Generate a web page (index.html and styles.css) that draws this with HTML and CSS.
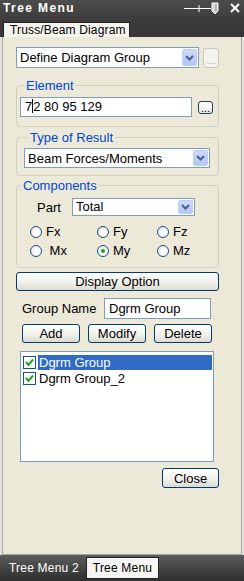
FILE: index.html
```html
<!DOCTYPE html>
<html lang="en">
<head>
    <meta charset="UTF-8">
    <title>Tree Menu</title>
    <link rel="stylesheet" href="styles.css">
</head>
<body>
<div class="window">
    <div class="titlebar">
        <span class="title">Tree Menu</span>
        <svg class="pin" width="36" height="14" viewBox="0 0 36 14">
            <path d="M0 7.5H27M15 4V11" stroke="#fff" stroke-width="1"/>
            <path d="M28 2H34V10L31 13L28 10Z" fill="#d8d8d8" stroke="#fff" stroke-width="1"/>
            <path d="M32 3V10" stroke="#888" stroke-width="1"/>
        </svg>
        <svg class="close" width="10" height="10" viewBox="0 0 10 10">
            <path d="M1 1L9 9M9 1L1 9" stroke="#fff" stroke-width="2"/>
        </svg>
    </div>
    <div class="tabstrip">
        <div class="tab">Truss/Beam Diagram</div>
    </div>

    <div class="panel">
        <div class="row">
            <div class="combo main">
                <span class="val">Define Diagram Group</span>
                <span class="arrow"><svg width="9" height="6" viewBox="0 0 9 6"><path d="M1 1L4.5 4.5L8 1" stroke="#4d6185" stroke-width="2" fill="none"/></svg></span>
            </div>
            <button class="dots off">...</button>
        </div>

        <fieldset class="group element">
            <legend>Element</legend>
            <div class="row">
                <div class="textbox elem">7<span class="caret"></span>2 80 95 129</div>
                <button class="dots small">...</button>
            </div>
        </fieldset>

        <fieldset class="group result">
            <legend>Type of Result</legend>
            <div class="combo">
                <span class="val">Beam Forces/Moments</span>
                <span class="arrow"><svg width="9" height="6" viewBox="0 0 9 6"><path d="M1 1L4.5 4.5L8 1" stroke="#4d6185" stroke-width="2" fill="none"/></svg></span>
            </div>
        </fieldset>

        <fieldset class="group comps">
            <legend>Components</legend>
            <div class="row part">
                <span class="label">Part</span>
                <div class="combo short">
                    <span class="val">Total</span>
                    <span class="arrow"><svg width="9" height="6" viewBox="0 0 9 6"><path d="M1 1L4.5 4.5L8 1" stroke="#4d6185" stroke-width="2" fill="none"/></svg></span>
                </div>
            </div>
            <div class="radios">
                <label class="radio"><span class="dot"></span>Fx</label>
                <label class="radio"><span class="dot"></span>Fy</label>
                <label class="radio"><span class="dot"></span>Fz</label>
                <label class="radio"><span class="dot"></span>&nbsp;Mx</label>
                <label class="radio"><span class="dot on"></span>My</label>
                <label class="radio"><span class="dot"></span>Mz</label>
            </div>
        </fieldset>

        <button class="btn display">Display Option</button>

        <div class="row gname">
            <span class="label">Group Name</span>
            <div class="textbox name">Dgrm Group</div>
        </div>

        <div class="row actions">
            <button class="btn">Add</button>
            <button class="btn">Modify</button>
            <button class="btn">Delete</button>
        </div>

        <div class="listbox">
            <div class="item sel">
                <span class="check"><svg width="11" height="11" viewBox="0 0 11 11"><path d="M2 5L4.5 8L9 2.5" stroke="#21a121" stroke-width="2" fill="none"/></svg></span>
                <span class="text">Dgrm Group</span>
            </div>
            <div class="item">
                <span class="check"><svg width="11" height="11" viewBox="0 0 11 11"><path d="M2 5L4.5 8L9 2.5" stroke="#21a121" stroke-width="2" fill="none"/></svg></span>
                <span class="text">Dgrm Group_2</span>
            </div>
        </div>

        <div class="row foot">
            <button class="btn close-btn">Close</button>
        </div>
    </div>

    <div class="bottombar">
        <span class="btab">Tree Menu 2</span>
        <span class="btab active">Tree Menu</span>
    </div>
</div>
</body>
</html>
```

FILE: styles.css
```css
body {
    margin: 0;
    background: #3a3a3a;
    font-family: "Liberation Sans", Arial, sans-serif;
    font-size: 13px;
    color: #000;
}
.window {
    width: 244px;
    height: 581px;
    display: flex;
    flex-direction: column;
    background: #e4e2da;
}
.titlebar {
    height: 16px;
    background: linear-gradient(#4c4c4c, #404040);
    display: flex;
    align-items: center;
    padding: 0 4px 0 3px;
}
.title {
    color: #fff;
    font-weight: bold;
    font-size: 12px;
    letter-spacing: 1.4px;
    flex: 1;
}
.pin {
    margin-right: 10px;
}
.tabstrip {
    height: 21px;
    background: linear-gradient(#3e3e3e, #363636);
    display: flex;
    align-items: flex-end;
    padding-left: 3px;
}
.tab {
    width: 127px;
    height: 15px;
    box-sizing: border-box;
    background: #f5f4ef;
    border: 1px solid #222;
    border-bottom: none;
    font-size: 12px;
    letter-spacing: 0.15px;
    line-height: 14px;
    padding-left: 6px;
    white-space: nowrap;
}
.panel {
    flex: 1;
    margin: 0 2px;
    border: 1px solid #a9a8a0;
    border-top: none;
    background: #ece9d8;
    padding: 10px 22px 0 13px;
}
.row {
    display: flex;
    align-items: center;
}
.combo {
    display: flex;
    height: 21px;
    box-sizing: border-box;
    border: 1px solid #7f9db9;
    background: #fff;
}
.combo .val {
    flex: 1;
    padding-left: 3px;
    line-height: 19px;
}
.combo .arrow {
    width: 15px;
    margin: 1px;
    box-sizing: border-box;
    border: 1px solid #bccdf6;
    border-radius: 2px;
    background: linear-gradient(#cbdafc, #b2c6f7);
    display: flex;
    align-items: center;
    justify-content: center;
}
.combo.main {
    width: 183px;
}
.dots {
    margin: 0;
    padding: 0;
    font-family: "Liberation Sans", Arial, sans-serif;
    font-size: 11px;
    line-height: 8px;
    border-radius: 3px;
    background: linear-gradient(#fefefe, #e8e7df);
}
.dots.off {
    width: 16px;
    height: 20px;
    margin-left: 4px;
    border: 1px solid #cbc8b8;
    color: #b0ad9d;
    background: #f4f3ee;
    padding-top: 4px;
}
.dots.small {
    width: 15px;
    height: 13px;
    margin-left: 6px;
    border: 1px solid #1c3f6a;
    color: #000;
    padding-top: 1px;
}
.group {
    margin: 0;
    border: 1px solid #d0d0bf;
    border-radius: 4px;
    padding: 0;
}
.group legend {
    color: #0046d5;
    padding: 0 2px;
    margin-left: 4px;
    line-height: 15px;
}
.element {
    margin-top: 10px;
    padding: 4px 0 9px 3px;
}
.textbox {
    box-sizing: border-box;
    border: 1px solid #7f9db9;
    background: #fff;
    padding-left: 4px;
}
.textbox.elem {
    width: 172px;
    height: 20px;
    line-height: 18px;
}
.caret {
    display: inline-block;
    width: 1px;
    height: 14px;
    background: #000;
    vertical-align: -2px;
}
.result {
    margin-top: 3px;
    padding: 3px 8px 7px 7px;
}
.result .combo {
    height: 20px;
}
.comps {
    margin-top: 2px;
    padding: 5px 0 7px 0;
}
.part .label {
    margin-left: 20px;
    width: 35px;
}
.combo.short {
    width: 123px;
    height: 18px;
}
.combo.short .val {
    line-height: 16px;
}
.radios {
    display: grid;
    grid-template-columns: 67px 60px auto;
    grid-auto-rows: 19px;
    margin: 6px 0 0 13px;
}
.radio {
    display: flex;
    align-items: center;
    gap: 4px;
}
.dot {
    width: 12px;
    height: 12px;
    box-sizing: border-box;
    border: 1px solid #1c5180;
    border-radius: 50%;
    background: radial-gradient(circle at 60% 60%, #fff 30%, #dcdbd2);
    display: flex;
    align-items: center;
    justify-content: center;
}
.dot.on::after {
    content: "";
    width: 4px;
    height: 4px;
    border-radius: 50%;
    background: #21a121;
}
.btn {
    margin: 0;
    padding: 0;
    font-family: "Liberation Sans", Arial, sans-serif;
    font-size: 13px;
    color: #000;
    border: 1px solid #003c74;
    border-radius: 3px;
    background: linear-gradient(#ffffff, #f0f0ea 60%, #dcdad0);
    box-sizing: border-box;
}
.display {
    display: block;
    width: 203px;
    height: 19px;
    margin-top: 4px;
}
.gname {
    margin-top: 7px;
}
.gname .label {
    margin-left: 6px;
    width: 82px;
}
.textbox.name {
    width: 107px;
    height: 21px;
    line-height: 19px;
}
.actions {
    margin-top: 5px;
    padding-left: 6px;
    gap: 8px;
}
.actions .btn {
    width: 58px;
    height: 19px;
}
.listbox {
    margin: 8px 5px 0 4px;
    height: 111px;
    box-sizing: border-box;
    border: 1px solid #7f9db9;
    background: #fff;
    padding: 2px 1px 0 2px;
}
.item {
    display: flex;
    align-items: center;
    height: 16px;
}
.check {
    width: 13px;
    height: 13px;
    box-sizing: border-box;
    border: 1px solid #1c5180;
    background: #fff;
    display: flex;
    align-items: center;
    justify-content: center;
    margin-right: 2px;
}
.item .text {
    flex: 1;
    line-height: 15px;
    padding-left: 1px;
}
.item.sel .text {
    background: #316ac5;
    color: #fff;
}
.foot {
    justify-content: flex-end;
    margin-top: 6px;
}
.close-btn {
    width: 57px;
    height: 20px;
}
.bottombar {
    height: 26px;
    background: linear-gradient(#5c5c5c, #2e2e2e);
    display: flex;
    align-items: center;
    padding-left: 3px;
    font-size: 12px;
    letter-spacing: 0.2px;
}
.btab {
    color: #fff;
    padding: 0 6px;
    line-height: 20px;
}
.btab.active {
    color: #000;
    background: #f5f5f2;
    border: 1px solid #222;
    padding: 0 6px;
    margin-left: 1px;
}
```
